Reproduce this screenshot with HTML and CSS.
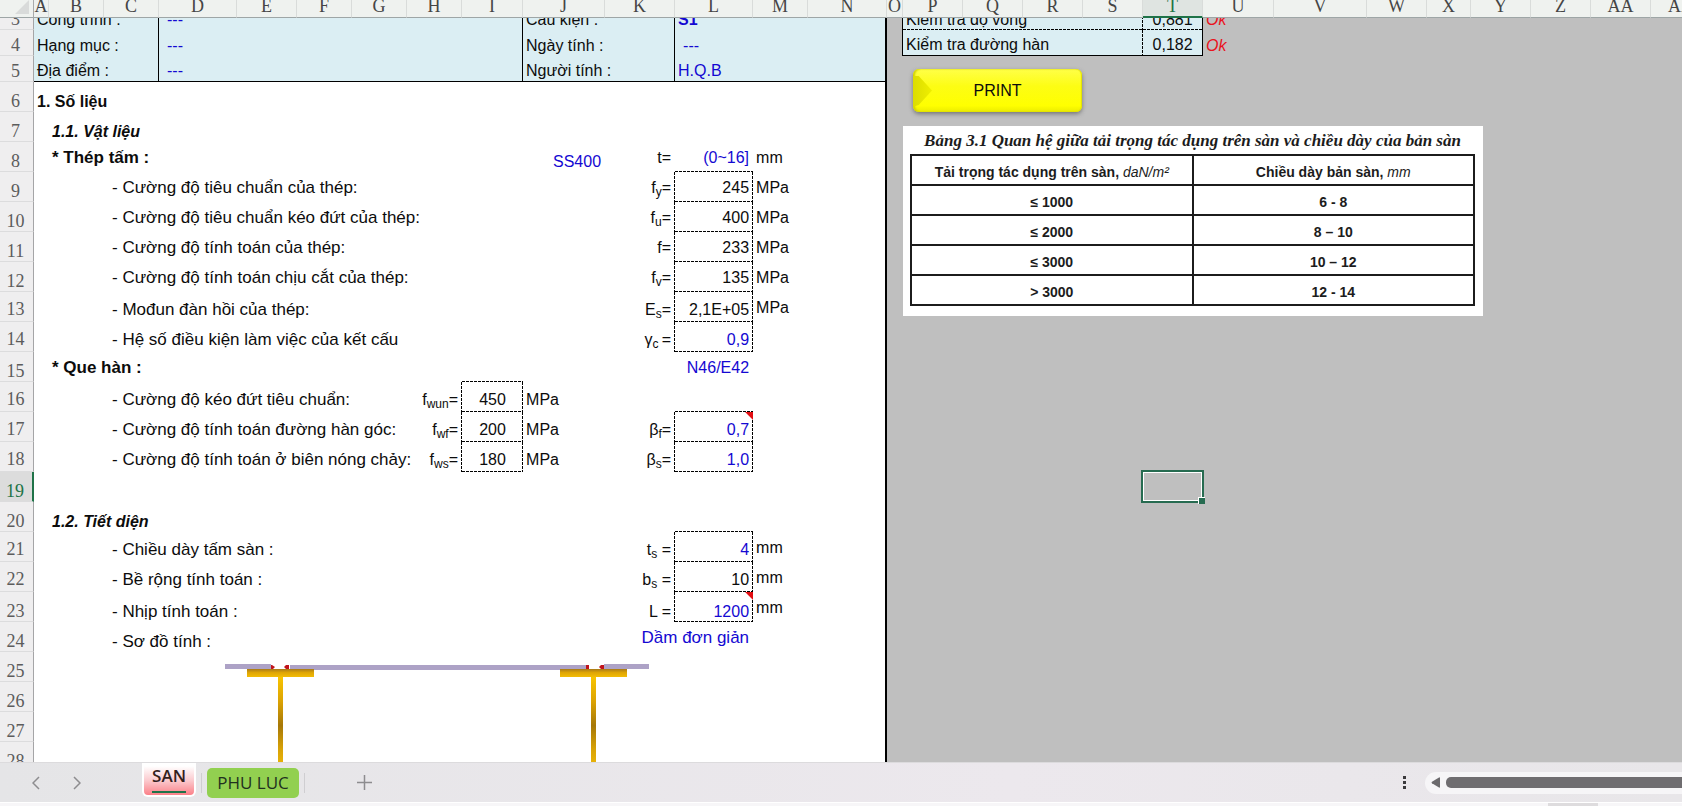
FILE: index.html
```html
<!DOCTYPE html>
<html lang="vi">
<head>
<meta charset="utf-8">
<title>SAN</title>
<link rel="stylesheet" href="styles.css">
</head>
<body>
<div class="colhead">
  <span class="corner"><svg width="14" height="14" viewBox="0 0 14 14"><path d="M14 0V14H0Z" fill="#d9dbda"/></svg></span>
  <span>A</span><span>B</span><span>C</span><span>D</span><span>E</span><span>F</span><span>G</span><span>H</span><span>I</span><span>J</span><span>K</span><span>L</span><span>M</span><span>N</span><span>O</span><span>P</span><span>Q</span><span>R</span><span>S</span><span class="picked">T</span><span>U</span><span>V</span><span>W</span><span>X</span><span>Y</span><span>Z</span><span>AA</span><span>AB</span>
</div>
<main class="sheet">
  <table class="cells">
    <colgroup>
      <col class="w34"><col class="w15"><col class="w55"><col class="w55"><col class="w78"><col class="w60"><col class="w55"><col class="w55"><col class="w55"><col class="w61"><col class="w82"><col class="w70"><col class="w78"><col class="w55"><col class="w79"><col class="w16"><col class="w60"><col class="w60"><col class="w60"><col class="w60"><col class="w60"><col class="w71"><col class="w93"><col class="w60"><col class="w44"><col class="w60"><col class="w60"><col class="w60"><col class="w60">
    </colgroup>
    <tbody>
      <tr class="short"><th>3</th><td class="info rule" colspan="3">Công trình :</td><td class="info rule sp blue" colspan="6">---</td><td class="info rule" colspan="2">Cấu kiện :</td><td class="info blue" colspan="3"><b>S1</b></td><td class="off rule"></td><td class="info dash-b dash-r" colspan="4">Kiểm tra độ võng</td><td class="info rule dash-b c">0,881</td><td class="grey red" colspan="8">Ok</td></tr>
      <tr class="short"><th>4</th><td class="info rule" colspan="3">Hạng mục :</td><td class="info rule sp blue" colspan="6">---</td><td class="info rule" colspan="2">Ngày tính :</td><td class="info sp blue" colspan="3">---</td><td class="off rule"></td><td class="info under dash-r" colspan="4">Kiểm tra đường hàn</td><td class="info rule under c">0,182</td><td class="grey red" colspan="8">Ok</td></tr>
      <tr class="short"><th>5</th><td class="info rule under" colspan="3">Địa điểm :</td><td class="info rule under sp blue" colspan="6">---</td><td class="info rule under" colspan="2">Người tính :</td><td class="info under blue" colspan="3">H.Q.B</td><td class="off" colspan="14"></td></tr>
      <tr><th>6</th><td colspan="14"><b>1. Số liệu</b></td><td class="off" colspan="14"></td></tr>
      <tr><th>7</th><td></td><td colspan="13"><b><i>1.1. Vật liệu</i></b></td><td class="off" colspan="14"></td></tr>
      <tr><th>8</th><td></td><td class="label mid" colspan="8"><b>* Thép tấm :</b></td><td class="r blue">SS400</td><td class="r mid">t=</td><td class="r mid blue dash-b">(0~16]</td><td class="mid" colspan="2">mm</td><td class="off" colspan="14"></td></tr>
      <tr><th>9</th><td colspan="2"></td><td class="label sp mid" colspan="8">- Cường độ tiêu chuẩn của thép:</td><td class="r mid dash-r">f<sub>y</sub>=</td><td class="r mid dash-b dash-r">245</td><td class="mid" colspan="2">MPa</td><td class="off" colspan="14"></td></tr>
      <tr><th>10</th><td colspan="2"></td><td class="label sp mid" colspan="8">- Cường độ tiêu chuẩn kéo đứt của thép:</td><td class="r mid dash-r">f<sub>u</sub>=</td><td class="r mid dash-b dash-r">400</td><td class="mid" colspan="2">MPa</td><td class="off" colspan="14"></td></tr>
      <tr><th>11</th><td colspan="2"></td><td class="label sp mid" colspan="8">- Cường độ tính toán của thép:</td><td class="r mid dash-r">f=</td><td class="r mid dash-b dash-r">233</td><td class="mid" colspan="2">MPa</td><td class="off" colspan="14"></td></tr>
      <tr><th>12</th><td colspan="2"></td><td class="label sp mid" colspan="8">- Cường độ tính toán chịu cắt của thép:</td><td class="r mid dash-r">f<sub>v</sub>=</td><td class="r mid dash-b dash-r">135</td><td class="mid" colspan="2">MPa</td><td class="off" colspan="14"></td></tr>
      <tr><th class="up">13</th><td colspan="2"></td><td class="label sp low" colspan="8">- Mođun đàn hồi của thép:</td><td class="r low dash-r">E<sub>s</sub>=</td><td class="r low dash-b dash-r">2,1E+05</td><td class="mid" colspan="2">MPa</td><td class="off" colspan="14"></td></tr>
      <tr><th class="up">14</th><td colspan="2"></td><td class="label sp low" colspan="8">- Hệ số điều kiện làm việc của kết cấu</td><td class="r low dash-r">γ<sub>c </sub>=</td><td class="r low blue dash-b dash-r">0,9</td><td colspan="2"></td><td class="off" colspan="14"></td></tr>
      <tr><th>15</th><td></td><td class="label mid" colspan="7"><b>* Que hàn :</b></td><td class="dash-b"></td><td colspan="2"></td><td class="r mid blue">N46/E42</td><td colspan="2"></td><td class="off" colspan="14"></td></tr>
      <tr><th class="up">16</th><td colspan="2"></td><td class="label sp low" colspan="5">- Cường độ kéo đứt tiêu chuẩn:</td><td class="r low dash-r">f<sub>wun</sub>=</td><td class="c low dash-b dash-r">450</td><td class="low" colspan="2">MPa</td><td class="dash-b"></td><td colspan="2"></td><td class="off" colspan="14"></td></tr>
      <tr><th class="up">17</th><td colspan="2"></td><td class="label sp low" colspan="5">- Cường độ tính toán đường hàn góc:</td><td class="r low dash-r">f<sub>wf</sub>=</td><td class="c low dash-b dash-r">200</td><td class="low">MPa</td><td class="r low dash-r">β<sub>f</sub>=</td><td class="r low blue dash-b dash-r note">0,7</td><td colspan="2"></td><td class="off" colspan="14"></td></tr>
      <tr><th class="up">18</th><td colspan="2"></td><td class="label sp low" colspan="5">- Cường độ tính toán ở biên nóng chảy:</td><td class="r low dash-r">f<sub>ws</sub>=</td><td class="c low dash-b dash-r">180</td><td class="low">MPa</td><td class="r low dash-r">β<sub>s</sub>=</td><td class="r low blue dash-b dash-r">1,0</td><td colspan="2"></td><td class="off" colspan="14"></td></tr>
      <tr><th class="picked">19</th><td colspan="14"></td><td class="off" colspan="5"></td><td class="grey active"><span class="cursor"></span></td><td class="grey" colspan="8"></td></tr>
      <tr><th>20</th><td></td><td colspan="10"><b><i>1.2. Tiết diện</i></b></td><td class="dash-b"></td><td colspan="2"></td><td class="off" colspan="14"></td></tr>
      <tr><th class="up">21</th><td colspan="2"></td><td class="label sp low" colspan="8">- Chiều dày tấm sàn :</td><td class="r low dash-r">t<sub>s</sub> =</td><td class="r low blue dash-b dash-r">4</td><td class="mid" colspan="2">mm</td><td class="off" colspan="14"></td></tr>
      <tr><th class="up">22</th><td colspan="2"></td><td class="label sp low" colspan="8">- Bề rộng tính toán :</td><td class="r low dash-r">b<sub>s</sub> =</td><td class="r low dash-b dash-r">10</td><td class="mid" colspan="2">mm</td><td class="off" colspan="14"></td></tr>
      <tr><th>23</th><td colspan="2"></td><td class="label sp" colspan="8">- Nhịp tính toán :</td><td class="r dash-r">L =</td><td class="r blue dash-b dash-r note">1200</td><td class="mid" colspan="2">mm</td><td class="off" colspan="14"></td></tr>
      <tr><th>24</th><td colspan="2"></td><td class="label sp" colspan="7">- Sơ đồ tính :</td><td class="label r mid blue" colspan="3">Dầm đơn giản</td><td colspan="2"></td><td class="off" colspan="14"></td></tr>
      <tr><th>25</th><td colspan="14"></td><td class="off" colspan="14"></td></tr>
      <tr><th>26</th><td colspan="14"></td><td class="off" colspan="14"></td></tr>
      <tr><th>27</th><td colspan="14"></td><td class="off" colspan="14"></td></tr>
      <tr><th>28</th><td colspan="14"></td><td class="off" colspan="14"></td></tr>
    </tbody>
  </table>

  <svg class="beam" width="424" height="110" viewBox="0 0 424 110">
    <defs>
      <linearGradient id="flange" x1="0" y1="0" x2="0" y2="1"><stop offset="0" stop-color="#a87a18"/><stop offset=".45" stop-color="#dfa504"/><stop offset="1" stop-color="#f3bc04"/></linearGradient>
      <linearGradient id="web" gradientUnits="userSpaceOnUse" x1="0" y1="13" x2="0" y2="110"><stop offset="0" stop-color="#f8c400"/><stop offset=".25" stop-color="#dca303"/><stop offset=".5" stop-color="#a67808"/><stop offset=".75" stop-color="#d9a306"/><stop offset="1" stop-color="#f4be08"/></linearGradient>
    </defs>
    <path fill="#ada2c6" d="M0 0H46V5H0ZM65 1H361V6H65ZM379 0H424V5H379Z"/>
    <path fill="url(#flange)" d="M22 5H89V13H22Z"/>
    <path fill="url(#flange)" d="M335 5H402V13H335Z"/>
    <path fill="url(#web)" d="M53 13H58V110H53ZM366 13H371V110H366Z"/>
    <path fill="#c0131b" d="M46 1H47L50 3L48 5H46ZM64 1H61L59 3L61 5H64ZM361 1H364V5H361ZM379 1H376L374 3L376 5H379Z"/>
  </svg>

  <button class="print" type="button">PRINT</button>

  <figure class="ref">
    <figcaption>Bảng 3.1 <span>Quan hệ giữa tải trọng tác dụng trên sàn và chiều dày của bản sàn</span></figcaption>
    <table>
      <thead><tr><th>Tải trọng tác dụng trên sàn, <i>daN/m²</i></th><th>Chiều dày bản sàn, <i>mm</i></th></tr></thead>
      <tbody>
        <tr><td>≤ 1000</td><td>6 - 8</td></tr>
        <tr><td>≤ 2000</td><td>8 – 10</td></tr>
        <tr><td>≤ 3000</td><td>10 – 12</td></tr>
        <tr><td>&gt; 3000</td><td>12 - 14</td></tr>
      </tbody>
    </table>
  </figure>
</main>
<footer class="tabbar">
  <nav class="steps">
    <button type="button" aria-label="Previous sheet"><svg width="8" height="14" viewBox="0 0 8 14"><path d="M7 1L1 7L7 13" fill="none" stroke="#8d8c8f" stroke-width="1.5"/></svg></button>
    <button type="button" aria-label="Next sheet"><svg width="8" height="14" viewBox="0 0 8 14"><path d="M1 1L7 7L1 13" fill="none" stroke="#8d8c8f" stroke-width="1.5"/></svg></button>
  </nav>
  <button class="tab current" type="button"><span>SAN</span></button>
  <i class="sep"></i>
  <button class="tab green" type="button">PHU LUC</button>
  <i class="sep"></i>
  <button class="add" type="button" aria-label="New sheet"><svg width="15" height="15" viewBox="0 0 15 15"><path d="M7.5 0V15M0 7.5H15" stroke="#8d8c8f" stroke-width="1.5"/></svg></button>
  <svg class="grip" width="3" height="13" viewBox="0 0 3 13"><path fill="#3b3a3c" d="M0 0H3V3H0ZM0 5H3V8H0ZM0 10H3V13H0Z"/></svg>
  <div class="scroll"><svg width="9" height="11" viewBox="0 0 9 11"><path d="M9 1V10Q9 11 8 10.500L1 6.300Q0 5.500 1 4.700L8 .500Q9 0 9 1Z" fill="#6b696c"/></svg><span class="thumb"></span></div>
</footer>
<div class="status"><span></span></div>
</body>
</html>
```
FILE: styles.css
```css
* { box-sizing: border-box; }

body {
  margin: 0;
  height: 100vh;
  display: flex;
  flex-direction: column;
  overflow: hidden;
  background: #fff;
  font: 16px/20px "Liberation Sans", Arial, sans-serif;
  color: #0c0c0c;
}

button { border: 0; padding: 0; background: none; color: inherit; font: inherit; }

/* column letters */
.colhead {
  flex: none;
  display: grid;
  grid-template-columns: 34px 15px 55px 55px 78px 60px 55px 55px 55px 61px 82px 70px 78px 55px 79px 16px 60px 60px 60px 60px 60px 71px 93px 60px 44px 60px 60px 60px 60px;
  height: 18px;
  background: #eff2ef;
  font: 18px/13px "Liberation Serif", "Times New Roman", serif;
  color: #454545;
  text-align: center;
}
.colhead span { border-right: 1px solid #d9dcda; border-bottom: 1px solid #9ea6a6; }
.colhead .corner { text-align: right; padding-right: 4px; border-right-color: #a9abab; }
.colhead .corner svg { display: block; margin-left: auto; }
.colhead .picked { background: #dfe4e1; color: #217346; border-bottom: 2px solid #1f7348; }

/* grid of cells */
.sheet { flex: 1; min-height: 0; position: relative; overflow: hidden; }
.cells {
  width: 1711px;
  margin-top: -14px;
  table-layout: fixed;
  border-collapse: separate;
  border-spacing: 0;
}
.w15 { width: 15px; } .w16 { width: 16px; } .w34 { width: 34px; } .w44 { width: 44px; }
.w55 { width: 55px; } .w60 { width: 60px; } .w61 { width: 61px; } .w70 { width: 70px; }
.w71 { width: 71px; } .w78 { width: 78px; } .w79 { width: 79px; } .w82 { width: 82px; } .w93 { width: 93px; }

.cells tr { height: 30px; }
.cells .short { height: 26px; }
.cells td { padding: 0 3px; vertical-align: bottom; white-space: nowrap; }
.cells th {
  padding: 0 2px 0 0;
  vertical-align: bottom;
  text-align: center;
  font: 18px/20px "Liberation Serif", "Times New Roman", serif;
  color: #5c5c5c;
  background: #efeeef;
  border-right: 1px solid #a5a5a7;
  border-bottom: 1px solid #dcdcdd;
}
.cells .up { padding-bottom: 2px; }
.cells th.picked { background: #dcdcdc; color: #217346; border-right: 2px solid #1f7348; }
.cells sub { font-size: 12px; line-height: 0; vertical-align: -3px; }
.cells .label { font-size: 17px; }

.cells .mid { padding-bottom: 4px; }
.cells .low { padding-bottom: 2px; }
.cells .sp { padding-left: 8px; }
.cells .r { text-align: right; padding-right: 4px; }
.cells .c { text-align: center; }
.cells .blue { color: #1408d2; }
.cells .red { color: #e9131d; font-style: italic; }

.cells .info { background-color: #dbeef3; }
.cells .rule { border-right: 1px solid #000; }
.cells .under { border-bottom: 1px solid #000; }
.cells .off { background: #bfbfbf; box-shadow: -2px 0 0 #000; }
.cells .grey { background: #bfbfbf; }

/* dashed cell edges */
.dash-b, .dash-r {
  --h: repeating-linear-gradient(90deg, #000 0 3px, transparent 3px 4px);
  --v: repeating-linear-gradient(180deg, #000 0 3px, transparent 3px 4px);
  background-repeat: no-repeat;
}
.dash-b { background-image: var(--h); background-size: 100% 1px; background-position: bottom; }
.dash-r { background-image: var(--v); background-size: 1px 100%; background-position: right; }
.dash-b.dash-r { background-image: var(--h), var(--v); background-size: 100% 1px, 1px 100%; background-position: bottom, right; }

.note, .active { position: relative; }
.note::before {
  content: "";
  position: absolute;
  top: 0;
  right: 0;
  width: 8px;
  height: 8px;
  background: #e30d12;
  clip-path: polygon(0 0, 100% 0, 100% 100%);
}
.cursor {
  position: absolute;
  inset: -2px -1px -1px -2px;
  border: 2px solid #266b50;
  box-shadow: inset 0 0 0 1px #fff;
}
.cursor::after {
  content: "";
  position: absolute;
  right: -3px;
  bottom: -3px;
  width: 6px;
  height: 6px;
  background: #266b50;
  border-left: 1px solid #fff;
  border-top: 1px solid #fff;
}

/* objects placed over the cells */
.beam { position: absolute; left: 225px; top: 646px; }
.print {
  position: absolute;
  left: 913px;
  top: 51px;
  width: 169px;
  height: 43px;
  border-radius: 6px;
  background: linear-gradient(#ffff48, #fdfd14 40%, #ffff00 85%, #ecec00);
  box-shadow: 0 2px 4px rgba(60, 60, 60, .55), inset 2px 0 2px #d2d200, inset -1px 0 1px #e2e200;
}
.print::before {
  content: "";
  position: absolute;
  left: 0;
  top: 0;
  width: 19px;
  height: 100%;
  background: linear-gradient(90deg, #dcdc00, #efef00);
  clip-path: polygon(0 16%, 30% 16%, 100% 50%, 30% 84%, 0 88%);
}

.ref {
  position: absolute;
  left: 903px;
  top: 108px;
  width: 580px;
  margin: 0;
  padding: 6px 8px 10px 7px;
  background: #fff;
  color: #1c1c1c;
}
.ref figcaption {
  height: 22px;
  font: italic bold 17px/18px "Liberation Serif", "Times New Roman", serif;
  text-align: center;
  white-space: nowrap;
}
.ref table { width: 100%; table-layout: fixed; border-collapse: collapse; }
.ref th, .ref td {
  height: 30px;
  padding: 4px 0 0;
  border: 2px solid #1c1c1c;
  text-align: center;
  font-size: 14px;
  line-height: 20px;
  font-weight: bold;
  white-space: nowrap;
}
.ref th i { font-weight: normal; }

/* sheet tabs */
.tabbar {
  flex: none;
  display: flex;
  align-items: center;
  height: 40px;
  background: linear-gradient(90deg, #e5e5e7, #ece8ed 60%, #e8e6e9);
  border-top: 1px solid #dcdbdd;
  font: 17px/24px "Open Sans", "Noto Sans", sans-serif;
  color: #22301f;
}
.steps { display: flex; gap: 33px; width: 142px; padding-left: 32px; }
.steps svg, .add svg { display: block; }
.tab { height: 30px; border-radius: 5px; }
.tab.current {
  align-self: flex-start;
  width: 54px;
  height: 34px;
  padding-bottom: 2px;
  border: solid #fff;
  border-width: 0 2px 2px;
  border-radius: 0 0 6px 6px;
  background: linear-gradient(#fff 10%, #fbc9cd 55%, #fb8088);
  color: #33211d;
  font-weight: 600;
}
.tab.current span { display: inline-block; border-bottom: 2px solid #1f7348; line-height: 26px; height: 30px; }
.tab.green { width: 92px; background: #92d050; }
.sep { width: 1px; height: 20px; margin: 0 5px; background: #cfced1; }
.add { margin-left: 47px; }
.grip { margin-left: auto; margin-right: 19px; }
.scroll {
  flex: 0 0 257px;
  display: flex;
  align-items: center;
  gap: 6px;
  height: 22px;
  padding-left: 6px;
  border-radius: 11px 0 0 11px;
  background: #f6f5f7;
}
.thumb { flex: 1; height: 11px; border-radius: 5px 0 0 5px; background: #6f6d70; }

.status { flex: none; display: flex; justify-content: flex-end; height: 4px; padding-right: 84px; background: #f7f6f8; border-top: 1px solid #fff; }
.status span { width: 50px; background: #dedcde; }
```
